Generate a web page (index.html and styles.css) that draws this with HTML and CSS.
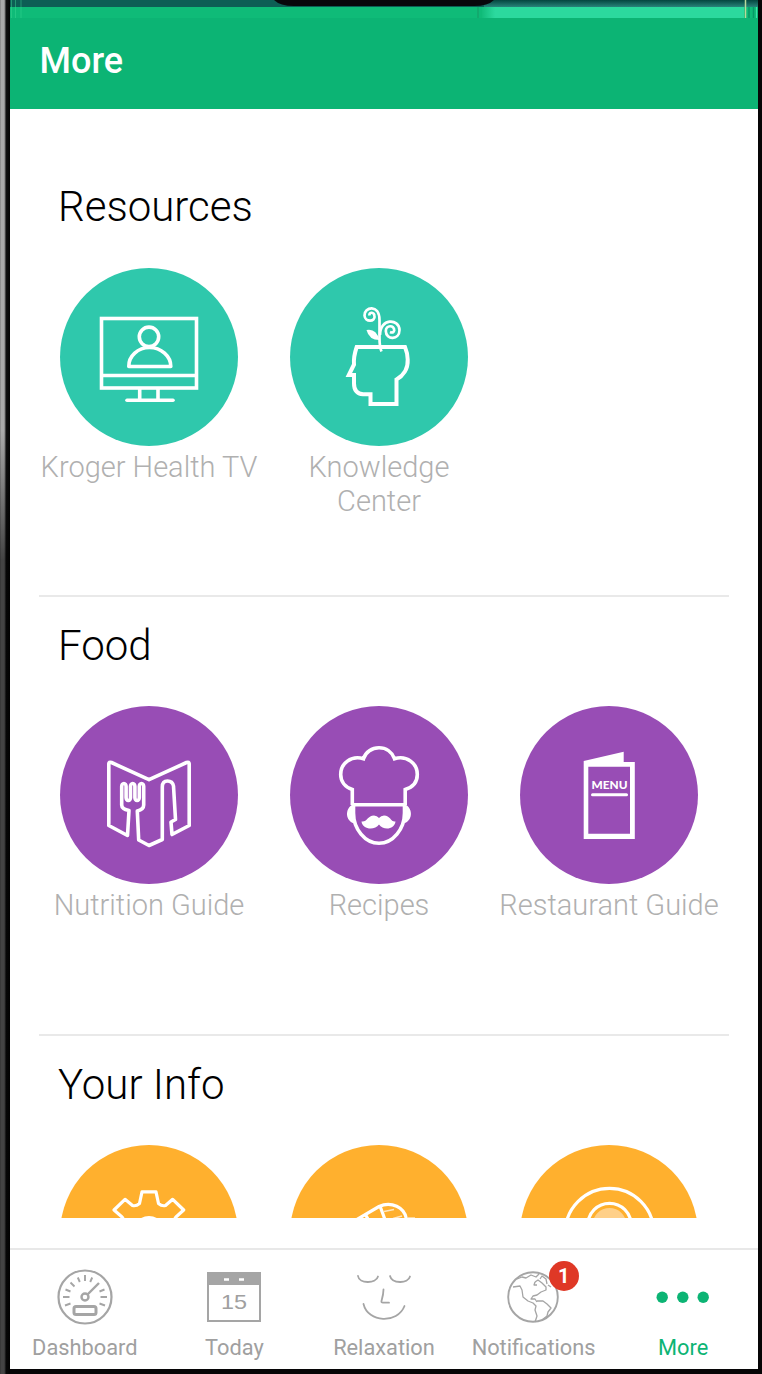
FILE: index.html
```html
<!DOCTYPE html>
<html lang="en">
<head>
<meta charset="utf-8">
<title>More</title>
<link rel="stylesheet" href="styles.css">
</head>
<body>
<div class="device">
<div class="bezel-left"></div>
<div class="screen">
  <div class="statusbar"><svg width="748" height="18" viewBox="0 0 748 18">
    <defs>
      <linearGradient id="sb" x1="0" x2="0" y1="0" y2="1"><stop offset="0" stop-color="#04463f"/><stop offset="1" stop-color="#28837a"/></linearGradient>
      <linearGradient id="mint" x1="0" x2="1" y1="0" y2="0"><stop offset="0" stop-color="#12bd7b"/><stop offset=".05" stop-color="#2cd99e"/><stop offset="1" stop-color="#2cd99e"/></linearGradient>
    </defs>
    <rect width="748" height="18" fill="#0fbb78"/>
    <rect width="474" height="7" fill="#0d5e55"/>
    <rect x="474" width="274" height="7" fill="url(#sb)"/>
    <rect x="467" y="7" width="2" height="11" fill="#12aa6e"/>
    <rect x="472" y="7" width="262" height="11" fill="url(#mint)"/>
    <path d="M1.500 0v18M5.500 0v18M11 0v18" stroke="#3cd894" stroke-width="1" opacity=".45"/>
    <path d="M735.500 0v18" stroke="#b9d99b" stroke-width="1.500"/><path d="M739 7v11M743.500 7v11" stroke="#079866" stroke-width="1.500"/><path d="M746.500 7v11" stroke="#3be2ad"/>
    <path d="M264 0Q270 6 284 6H464Q478 6 484 0Z" fill="#08070b"/>
  </svg></div>
  <header class="appbar">More</header>
  <main class="content">
    <section class="section">
      <h2 class="heading">Resources</h2>
      <div class="grid first">
        <div class="item"><svg class="disc teal" viewBox="0 0 178 178"><circle class="bg" cx="89" cy="89" r="89"/>
          <g class="line"><rect x="41.500" y="50.500" width="95" height="69.500"/><path d="M41.500 107.500h95M79.700 120v12M98 120v12"/><path d="M67 132.300h46" stroke-linecap="round"/><circle cx="89" cy="68.800" r="9.700"/><path d="M68.800 98.500h42C111 88 101 79.500 89.500 79.500S68.500 88 68.800 98.500Z" stroke-linejoin="round"/></g></svg>
          <div class="label">Kroger Health TV</div></div>
        <div class="item"><svg class="disc teal" viewBox="0 0 178 178"><circle class="bg" cx="89" cy="89" r="89"/>
          <g class="line"><path class="heavy" d="M66.700 79H115Q117.500 85 117.700 91.500C118.200 101 113 108 106.500 111.500V136H80.500V126.300H73Q64 125.500 64 115.500V107H58.800L64 96.500Q63.300 89 66.700 79Z"/>
          <path class="fine" d="M91.500 83.500Q89.500 79 89.500 70V52C89.500 35.500 74 39 74.500 47.500C75 54.500 85.500 54 84.500 48C84 44 79.500 43.500 79.300 47.500"/>
          <path class="fine" d="M90 67C90 50 109 50 109.500 62C109.500 72 96 72.500 95.800 63C95.800 57 104.500 56.500 104.200 62.500Q103.500 65.500 100 64"/></g><path fill="#fff" d="M76.500 62Q86 60 89.500 72Q79 72 76.500 62Z"/></svg>
          <div class="label">Knowledge Center</div></div>
      </div>
    </section>
    <section class="section">
      <h2 class="heading">Food</h2>
      <div class="grid">
        <div class="item"><svg class="disc purple" viewBox="0 0 178 178"><circle class="bg" cx="89" cy="89" r="89"/>
          <path class="line" stroke-linejoin="round" d="M67.500 129.500L48.800 119.500V58Q48.800 55.500 51.500 56.500L89 73.700L126.500 56.500Q129.200 55.500 129.200 58V119.500L112 128.500L111 116L115.500 113.500L113.500 80Q112.500 75 107.500 75Q102.300 75 102.300 81V133.500L89 139.500L78.700 134L77.300 105Q83.700 103.500 83.700 99V80.500a2.200 3 0 0 0-4.400 0V91.500a2.200 3 0 0 1-4.400 0V80.500a2.200 3 0 0 0-4.400 0V91.500a2.200 3 0 0 1-4.400 0V80.500a2.200 3 0 0 0-4.400 0V99Q61.700 103 69 104.500Z"/></svg>
          <div class="label">Nutrition Guide</div></div>
        <div class="item"><svg class="disc purple" viewBox="0 0 178 178"><circle class="bg" cx="89" cy="89" r="89"/>
          <g class="line"><path d="M62.300 99V83.500C54.500 81 50.700 75 50.700 68.500C50.700 57.500 61 49 73.500 52.700C75.500 46 82 41.800 89 41.800S102 46 104.500 52.700C117 49 127.300 57.500 127.300 68.500C127.300 75 123.500 81 115.200 83.500V99"/><path d="M62 98.700H116M63.500 99V107C63.500 123 75 137.300 89 137.300S114.500 123 114.500 107V99"/></g>
          <path fill="#fff" d="M62 99C55 103 55 115 64.500 117.500ZM116 99C123 103 123 115 113.500 117.500ZM71.500 115.500C77 116.500 77.500 109.500 84 109.500Q87 109.500 89 112Q91 109.500 94 109.500C100.500 109.500 101 116.500 105.500 115.500C104.500 124 93 124.500 89 118.500C85 124.500 72.500 124 71.500 115.500Z"/></svg>
          <div class="label">Recipes</div></div>
        <div class="item"><svg class="disc purple" viewBox="0 0 178 178"><circle class="bg" cx="89" cy="89" r="89"/>
          <path fill="#fff" fill-rule="evenodd" d="M63.700 55L103.700 45.700V56H114.800V133H63.700ZM68.300 60.700V127.800H110V60.700Z"/><path d="M72.500 88.800h34" stroke="#fff" stroke-width="3" stroke-linecap="round"/><text class="menu" x="71.500" y="83.200" textLength="36" lengthAdjust="spacingAndGlyphs">MENU</text></svg>
          <div class="label">Restaurant Guide</div></div>
      </div>
    </section>
    <section class="section">
      <h2 class="heading">Your Info</h2>
      <div class="grid">
        <div class="item"><svg class="disc orange" viewBox="0 0 178 178"><circle class="bg" cx="89" cy="89" r="89"/>
          <g class="line" stroke-linejoin="round"><path d="M64 75L62 72L54 65L65 54.300L72.500 60.500Q76 61.500 79.500 58.500L82 46.800H96L98.500 58.500Q102 61.500 105.500 60.500L112.700 54.300L123.700 65L116 72L114 75"/><circle cx="89" cy="86" r="13.500"/></g></svg></div>
        <div class="item"><svg class="disc orange" viewBox="0 0 178 178"><circle class="bg" cx="89" cy="89" r="89"/>
          <path class="line" d="M66 75L89 61.500C101 56 115 62 116.500 75M90 61L95.500 76M76 70.500L79 76"/><path class="line faint" d="M94 66.500L104 64.500M103 73.500L112 71M118 73H125"/></svg></div>
        <div class="item"><svg class="disc orange" viewBox="0 0 178 178"><circle class="bg" cx="89" cy="89" r="89"/>
          <g class="line"><circle cx="89.500" cy="87.700" r="44.300"/><circle cx="89.500" cy="80" r="21.700"/></g><circle cx="89.500" cy="80" r="17" fill="#ffd089"/></svg></div>
      </div>
    </section>
  </main>
  <nav class="tabs">
    <div class="tab"><svg class="tabicon" viewBox="0 0 60 60"><circle cx="30" cy="30" r="26.500" stroke-width="2.200"/><circle cx="30" cy="30" r="3.500" stroke-width="2.400"/><path stroke-width="2.400" d="M32.500 27.500L44 16"/><rect x="19" y="39.500" width="22" height="8" rx="2" stroke-width="3"/><path stroke-width="1.900" d="M30 8v6M22.800 10.500l2 4.500M37.200 10.500l-2 4.500M15.500 15.500l4 4M10.500 22.500l5 2M8 30h6.500M10 38.500l5.500-2M49.500 22.500l-5 2M52 30h-6.500M50 38.500l-5.500-2"/></svg><span>Dashboard</span></div>
    <div class="tab"><svg class="tabicon" viewBox="0 0 60 60"><path fill="#a5a5a5" stroke="none" d="M3 5H57V18H3Z"/><path stroke-width="2" d="M4 17V54H56V17"/><path stroke="#fff" stroke-width="2.600" d="M20 12.500h5M35 12.500h5"/><text class="date" x="30" y="42" textLength="26" lengthAdjust="spacingAndGlyphs">15</text></svg><span>Today</span></div>
    <div class="tab"><svg class="tabicon" viewBox="0 0 60 60"><path stroke-width="1.800" stroke-linecap="round" d="M4 9C5 16.800 22 17 24 9.500M36 9C38 16.800 54 17 56 9.500M29.500 22.500Q29.500 27 27.500 34Q27 35.700 29 35.700H35M9.500 37C14 56 43.500 57 50.500 39"/></svg><span>Relaxation</span></div>
    <div class="tab"><svg class="tabicon" viewBox="0 0 60 60"><circle cx="29" cy="30" r="24.800" stroke-width="1.900"/><path stroke-width="1.300" stroke-linejoin="round" d="M9 20L16 19L18 23L19 30L24 34L29 36L32 39L31 43L33 49L31 55M13 12L18 10L22 11L27 8L32 10L35 7M31 15L34 13L38 16L42 20L42 23L37 25L33 28L29 29L27 32L31 32L33 35M33 34L39 34L43 37L47 41L44 45L43 49L38 53M31 15L30 18L33 18M36 12L38 9L42 12L43 17M44 18L47 20"/></svg><i class="badge">1</i><span>Notifications</span></div>
    <div class="tab active"><svg class="tabicon" viewBox="0 0 60 60"><g fill="#0cb474" stroke="none"><circle cx="9.200" cy="30.300" r="5.700"/><circle cx="29.800" cy="30.300" r="5.700"/><circle cx="50.200" cy="30.300" r="5.700"/></g></svg><span>More</span></div>
  </nav>
</div>
</div>
</body>
</html>
```
FILE: styles.css
```css
* { box-sizing: border-box; }
body { margin: 0; background: #060506; font-family: Roboto, "Liberation Sans", sans-serif; }
.device { display: flex; width: 762px; height: 1374px; padding: 0 4px 5px 0; overflow: hidden; }
.bezel-left { flex: 0 0 10px; height: 1374px; background: linear-gradient(transparent 0, transparent 430px, rgba(0,0,0,.6) 560px), linear-gradient(90deg, #777 0, #aaa 1px, #aaa 4px, #777 5px, #111 6px, #050505 100%); }
.screen { flex: 1; display: flex; flex-direction: column; background: #fff; height: 1369px; }
.statusbar { flex: 0 0 18px; }
.statusbar svg { display: block; }
.appbar { flex: 0 0 91px; background: #0cb474; color: #fff; font-size: 36px; font-weight: 500; line-height: 86px; padding-left: 29.5px; }
.content { flex: 0 0 1109px; overflow: hidden; padding: 49px 29px 0; }
.section { height: 439px; border-bottom: 2px solid #e9e9e9; }
.heading { margin: 0; padding: 24px 0 0 19px; font-size: 42px; font-weight: 300; line-height: 50px; color: #000; }
.grid { display: grid; grid-template-columns: repeat(3, 230px); margin: 35px 0 0 -5px; }
.grid.first { margin-top: 36px; }
.item { display: flex; flex-direction: column; align-items: center; }
.disc { width: 178px; height: 178px; display: block; }
.teal .bg { fill: #2fc8ac; }
.purple .bg { fill: #984db5; }
.orange .bg { fill: #ffb02e; }
.line { fill: none; stroke: #fff; stroke-width: 3.6px; }
.orange .line { stroke-width: 3.2px; }
.heavy { stroke-width: 4px; }
.fine { stroke-width: 2.7px; }
.orange .faint { stroke-width: 1.6px; opacity: .7; }
.menu { font: 900 11.5px Lato, sans-serif; fill: #fff; }
.label { font-size: 29px; font-weight: 300; line-height: 34px; text-align: center; color: #b0b0b0; padding-top: 4px; max-width: 230px; }
.tabs { display: grid; grid-template-columns: repeat(5, 1fr); height: 121px; margin-top: 30px; border-top: 2px solid #e8e8e8; }
.tab { position: relative; display: flex; flex-direction: column; align-items: center; padding-top: 17px; color: #a0a0a0; font-size: 21.8px; line-height: 26px; }
.tab span { margin-top: 8px; }
.tabicon { width: 60px; height: 60px; fill: none; stroke: #a5a5a5; }
.date { font: 21px "Liberation Sans", sans-serif; fill: #a0a0a0; stroke: none; text-anchor: middle; }
.badge { position: absolute; left: 90px; top: 11px; width: 30px; height: 30px; border-radius: 50%; background: #df3826; color: #fff; font: 700 20px/31px Roboto, sans-serif; text-align: center; }
.active { color: #0cb474; }
```
